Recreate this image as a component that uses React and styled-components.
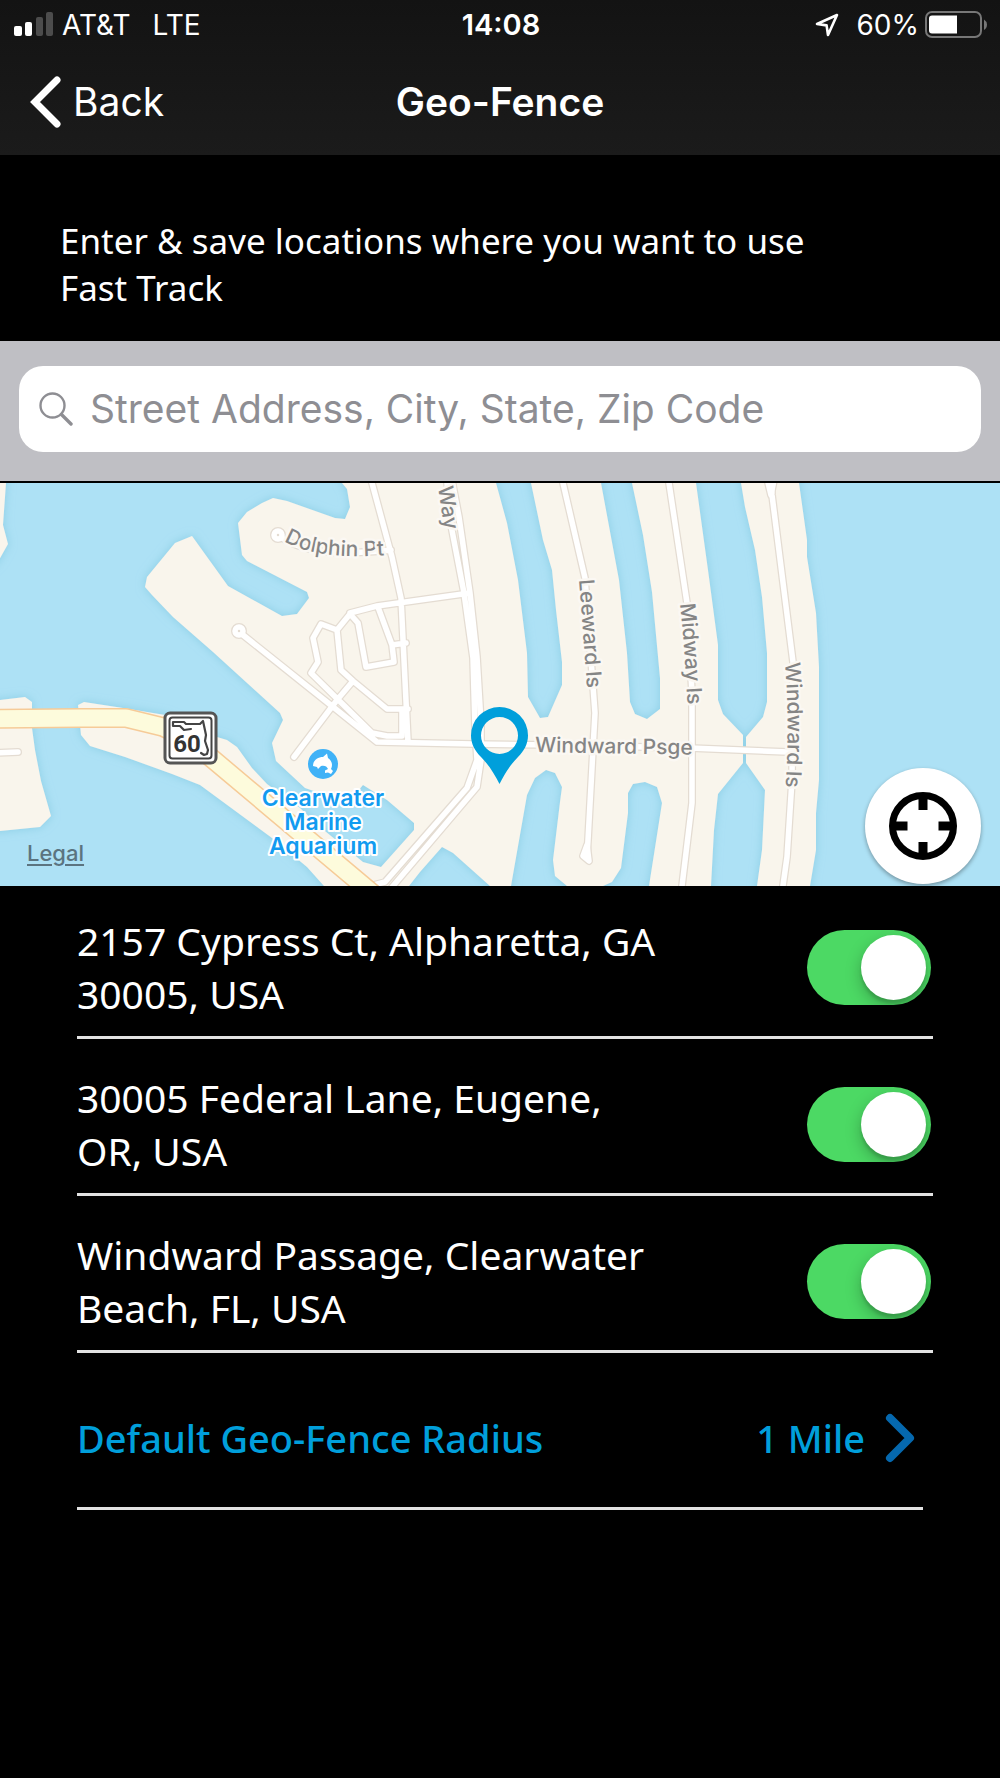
import React, { useState } from "react";
import styled, { createGlobalStyle } from "styled-components";

const uiFont = `Inter, "Liberation Sans", sans-serif`;
const brandFont = `"Noto Sans", "Open Sans", sans-serif`;

const GlobalStyle = createGlobalStyle`
  *, *::before, *::after { box-sizing: border-box; }
  body { margin: 0; background: #000; }
`;

const Screen = styled.div`
  min-height: 100vh;
  background: #000;
  color: #fff;
  font-family: ${uiFont};
`;

const Header = styled.header`
  background: linear-gradient(#131313, #1b1b1b);
`;

const StatusBar = styled.div`
  display: grid;
  grid-template-columns: 1fr auto 1fr;
  align-items: center;
  height: 50px;
  padding: 0 12px 0 14px;
  font-size: 28px;
  line-height: 36px;
`;

const StatusGroup = styled.div`
  display: flex;
  align-items: center;
  justify-content: ${(p) => (p.$end ? "flex-end" : "flex-start")};
  gap: ${(p) => (p.$end ? "5px" : "8px")};
`;

const Network = styled.span`
  margin-left: 14px;
`;

const Clock = styled.time`
  font-size: 29px;
  font-weight: 600;
`;

const Percent = styled.span`
  margin-left: 12px;
`;

const NavBar = styled.nav`
  display: grid;
  grid-template-columns: 1fr auto 1fr;
  align-items: center;
  height: 105px;
  padding: 0 30px 2px;
`;

const BackButton = styled.button`
  display: flex;
  align-items: center;
  justify-self: start;
  gap: 12px;
  padding: 0;
  border: 0;
  background: none;
  color: #fff;
  font: 400 39px/48px ${uiFont};
`;

const Title = styled.h1`
  margin: 0;
  font-size: 39px;
  line-height: 48px;
  font-weight: 600;
`;

const Intro = styled.p`
  max-width: 860px;
  margin: 0;
  padding: 62px 0 30px 60px;
  font: 400 35px/47px ${brandFont};
`;

const SearchBar = styled.form`
  padding: 25px 19px 29px;
  background: #bfbfc4;
  border-bottom: 2px solid #000;
`;

const SearchField = styled.label`
  display: flex;
  align-items: center;
  gap: 17px;
  height: 86px;
  padding: 0 20px;
  border-radius: 24px;
  background: #fff;
`;

const SearchInput = styled.input`
  flex: 1;
  min-width: 0;
  padding: 0;
  border: 0;
  outline: 0;
  background: none;
  color: #000;
  font: 400 39px/48px ${uiFont};
  &::placeholder { color: #8e8e93; opacity: 1; }
`;

const MapPanel = styled.section`
  position: relative;
  height: 403px;
  background: #ade1f5;
  overflow: hidden;
`;

const MapCanvas = styled.svg`
  display: block;
  width: 100%;
  height: 100%;
`;

const RoadLabel = styled.text`
  fill: #858585;
  stroke: #fbf8f3;
  stroke-width: 5px;
  stroke-linejoin: round;
  paint-order: stroke;
  font: 500 21px ${uiFont};
`;

const PlaceLabel = styled.text`
  fill: #129bf0;
  stroke: #fff;
  stroke-width: 4px;
  stroke-linejoin: round;
  paint-order: stroke;
  text-anchor: middle;
  font: 600 23px ${uiFont};
`;

const ShieldNumber = styled.text`
  fill: #333;
  text-anchor: middle;
  font: 700 24px Roboto, sans-serif;
`;

const LegalLink = styled.a`
  position: absolute;
  left: 27px;
  bottom: 18px;
  color: #5b7480;
  font-size: 22px;
  font-weight: 500;
  line-height: 30px;
  text-underline-offset: 3px;
`;

const LocateButton = styled.button`
  position: absolute;
  right: 19px;
  bottom: 2px;
  display: grid;
  place-items: center;
  width: 116px;
  height: 116px;
  padding: 0;
  border: 0;
  border-radius: 50%;
  background: #fff;
  box-shadow: 0 2px 4px rgba(0, 0, 0, 0.35);
`;

const Locations = styled.ul`
  display: flex;
  flex-direction: column;
  gap: 4px;
  margin: 0;
  padding: 28px 67px 0 77px;
  list-style: none;
`;

const LocationRow = styled.li`
  display: flex;
  align-items: center;
  justify-content: space-between;
  padding: ${(p) => (p.$first ? "0" : "28px")} 2px 16px 0;
  border-bottom: 3px solid #e2e2e2;
`;

const Address = styled.label`
  max-width: 590px;
  font: 400 39px/53px ${brandFont};
`;

const Switch = styled.input`
  appearance: none;
  flex: none;
  width: 124px;
  height: 75px;
  margin: 0;
  padding: 5px;
  overflow: hidden;
  border-radius: 38px;
  background: ${(p) => (p.checked ? "#4cd964" : "#39393d")};
  &::before {
    content: "";
    display: block;
    width: 65px;
    height: 65px;
    margin-left: ${(p) => (p.checked ? "49px" : "0")};
    border-radius: 50%;
    background: #fff;
    box-shadow: 0 6px 16px rgba(0, 0, 0, 0.25), 0 4px 3px rgba(0, 0, 0, 0.12);
  }
`;

const RadiusButton = styled.button`
  display: flex;
  align-items: center;
  justify-content: space-between;
  width: calc(100% - 154px);
  height: 157px;
  margin: 0 77px;
  padding: 16px 8px 0 0;
  border: 0;
  border-bottom: 3px solid #e2e2e2;
  background: none;
  color: #009fdb;
  font: 500 38px/53px ${brandFont};
`;

const RadiusValue = styled.span`
  display: flex;
  align-items: center;
  gap: 20px;
`;

const SignalIcon = () => (
  <svg width="40" height="26" viewBox="0 0 40 26" aria-hidden="true">
    <rect x="0" y="14" width="8" height="10" rx="2" fill="#fff" />
    <rect x="11" y="10" width="7" height="14" rx="2" fill="#fff" />
    <rect x="22" y="5" width="7" height="19" rx="2" fill="#4c4c4c" />
    <rect x="32" y="0" width="7" height="24" rx="2" fill="#4c4c4c" />
  </svg>
);

const LocationArrow = () => (
  <svg width="24" height="24" viewBox="0 0 24 24" aria-hidden="true">
    <path d="M2 11 22 2 13 22 11.6 12.4Z" fill="none" stroke="#fff" strokeWidth="2.6" strokeLinejoin="round" />
  </svg>
);

const BatteryIcon = () => (
  <svg width="64" height="28" viewBox="0 0 64 28" aria-hidden="true">
    <rect x="2" y="1" width="55" height="25" rx="6" fill="none" stroke="#777" strokeWidth="2" />
    <path d="M8 4.500H33V22.500H8Q5 22.500 5 19.500V7.500Q5 4.500 8 4.500Z" fill="#fff" />
    <path d="M60 8.500Q63 10.500 63 13.500Q63 17 60 19Z" fill="#777" />
  </svg>
);

const BackChevron = () => (
  <svg width="31" height="52" viewBox="0 0 31 52" aria-hidden="true">
    <path d="M27 4 5 26 27 48" fill="none" stroke="#fff" strokeWidth="7" strokeLinecap="round" strokeLinejoin="miter" />
  </svg>
);

const SearchIcon = () => (
  <svg width="34" height="34" viewBox="0 0 34 34" aria-hidden="true">
    <circle cx="13.500" cy="13.500" r="12" fill="none" stroke="#8e8e93" strokeWidth="2.400" />
    <path d="M22.500 22.500 32 32" stroke="#8e8e93" strokeWidth="3.400" strokeLinecap="round" />
  </svg>
);

const CrosshairIcon = () => (
  <svg width="70" height="70" viewBox="0 0 70 70" aria-hidden="true">
    <circle cx="35" cy="35" r="30.500" fill="none" stroke="#000" strokeWidth="7" />
    <path d="M35 3V19M35 51V67M3 35H19.500M50.500 35H67" stroke="#000" strokeWidth="9" />
  </svg>
);

const NextChevron = () => (
  <svg width="30" height="50" viewBox="0 0 30 50" aria-hidden="true">
    <path d="M5 5 25 25 5 45" fill="none" stroke="#0568ae" strokeWidth="8" strokeLinecap="round" strokeLinejoin="round" />
  </svg>
);

const land = [
  "M-20 470H7L6 483 3 525 8 544-1 560-20 580Z",
  "M-20 701 0 700 25 697 32 702V728L35 750 41 781 51 816 40 827 0 831H-20Z",
  // Mainland with its two basins, then the finger islands as one mass cut by canals
  "M342 470V483L347 489 350 507 345 519 335 518 287 501 273 498 262 503 247 512 238 523 242 555 247 561 307 592 309 598 297 614 282 616 228 586 192 536 175 543 147 577 145 587 152 595 173 617 213 652 280 713 283 720 272 743 276 761 305 788 340 800 352 798 363 785 387 800 414 823V830L381 867 363 862 320 827 300 808 267 784 252 768 237 747 227 740 217 737 165 715 123 708 84 702 78 705 81 735 90 746 125 757 172 774 200 785 272 838 307 867 324 886V900H809L810 886 816 850V813L819 780V667L816 613 807 557V540L799 483V470Z",
  "M400 900 409 886 420 872 442 847 453 853 490 886V900Z",
  "M492 470 496 483 507 523 518 580 527 653 528 697 540 718 548 717 562 685V662L556 610 552 570 543 540 531 483 528 470Z",
  "M509 900 511 886 527 795 535 778 546 770 555 773 562 787 560 802 553 860 555 876 567 886V900Z",
  "M599 470 601 483 619 580 627 653 630 702 635 714 647 719 660 709V678L652 592 643 535 632 483V470Z",
  "M603 900V886L612 882 621 868 628 813V793L633 784 645 782 657 787 662 803 649 886V900Z",
  "M695 470 696 483 708 570 718 645V700L723 714 743 735V763L718 794 714 830 711 886V900H756L757 886 762 850 765 790 746 763V737L763 717 767 702V653L762 597 755 550 745 507 741 483V470Z",
].join("");

const roads = [
  "M368 470 372 483 392 557 401 598 408 742",
  "M446 470 450 520 464 593 473 658 475 727 477 760 467 788 385 882 370 886",
  "M450 470 459 517 470 593 477 657 481 723 481 760 477 787 393 886 385 896",
  "M350 613 377 606 470 593",
  "M350 614 337 630 321 624 313 638 318 662 311 673 372 733 387 736H402V710",
  "M337 630 341 670 353 681 387 709H408",
  "M350 614 358 623 366 667 394 662 392 645 378 607M392 645 406 643",
  "M353 681 337 700 294 757",
  "M243 635 377 742 473 744 560 745 690 748 788 752",
  "M282 538C310 556 350 554 391 550",
  "M559 470 563 483 585 578 595 713 588 840 587 855",
  "M668 470 669 483 687 603 692 693V803L682 886 680 900",
  "M771 485 772 495 793 662 792 780 787 857 781 900",
  "M-10 753 18 752",
].join("");

const culDeSacs = "M587 845 583 856 589 861ZM765 470 771 495 776 470Z";
const causeway = "M-20 719 80 718H126L163 727Q190 739 209 756L372 893";

const AreaMap = () => (
  <MapCanvas viewBox="0 483 1000 403" preserveAspectRatio="xMidYMid slice" role="img" aria-label="Map of Clearwater Beach">
    <defs>
      <filter id="shore" x="-5%" y="-5%" width="110%" height="110%">
        <feDropShadow dx="0" dy="0" stdDeviation="5" floodColor="#83c9e0" floodOpacity="0.8" />
      </filter>
      <path id="dolphin-line" d="M284 541Q318 562 400 554" />
      <path id="way-line" d="M438 487 446 540" />
      <path id="leeward-line" d="M579 580Q583 630 588 700" />
      <path id="midway-line" d="M680 604Q685 650 688 715" />
      <path id="windward-line" d="M785 663Q790 725 785 800" />
    </defs>
    <path d={land} fill="#f9f5ec" fillRule="evenodd" filter="url(#shore)" />

    <g fill="none" strokeLinecap="round" strokeLinejoin="round">
      <g stroke="#e4dcd2" strokeWidth="8">
        <path d={roads} />
        <circle cx="239" cy="631" r="4" />
        <circle cx="278" cy="535" r="4" />
        <path d={culDeSacs} />
      </g>
      <g stroke="#fff" strokeWidth="5.500">
        <path d={roads} />
        <circle cx="239" cy="631" r="4" />
        <circle cx="278" cy="535" r="4" />
        <path d={culDeSacs} fill="#fff" />
      </g>
      <path d={causeway} stroke="#f6cb98" strokeWidth="20" />
      <path d={causeway} stroke="#fdfbdc" strokeWidth="17" />
    </g>

    <RoadLabel><textPath href="#dolphin-line">Dolphin Pt</textPath></RoadLabel>
    <RoadLabel><textPath href="#way-line">Way</textPath></RoadLabel>
    <RoadLabel><textPath href="#leeward-line">Leeward Is</textPath></RoadLabel>
    <RoadLabel><textPath href="#midway-line">Midway Is</textPath></RoadLabel>
    <RoadLabel><textPath href="#windward-line">Windward Is</textPath></RoadLabel>
    <RoadLabel x="535" y="752" transform="rotate(1 535 752)">Windward Psge</RoadLabel>

    <g>
      <rect x="165" y="713" width="51" height="50" rx="5" fill="#fff" stroke="#555" strokeWidth="3" />
      <rect x="169.500" y="717.500" width="42" height="41" rx="3" fill="#fff" stroke="#444" strokeWidth="2" />
      <path d="M173 722 184 722 186 724 200 724 203 721 206 735 205 741 208 750 207 754 204 755 201 753M173 722V726L180 726 184 730 191 729" fill="none" stroke="#444" strokeWidth="2.200" strokeLinejoin="round" strokeLinecap="round" />
      <ShieldNumber x="187" y="752">60</ShieldNumber>
    </g>

    <circle cx="323" cy="764" r="15" fill="#40b2f7" />
    <path d="M313 766C313 760 318 757 323 757L327 753.500 328 758C332 761 333 765 331 769L333 771 331 774 328 772.500 325 773 325 770.500 328 769C327 766 324 765 321 766L318 769 317 767Z" fill="#fff" />
    <PlaceLabel x="323" y="806">Clearwater</PlaceLabel>
    <PlaceLabel x="323" y="830">Marine</PlaceLabel>
    <PlaceLabel x="323" y="854">Aquarium</PlaceLabel>

    <path d="M499.500 707A28.500 28.500 0 0 0 471 735.500C471 744 475 751 481 757C489 765 495 775 499.500 784C504 775 510 765 518 757C524 751 528 744 528 735.500A28.500 28.500 0 0 0 499.500 707ZM499.500 717A18.500 18.500 0 1 1 499.500 754A18.500 18.500 0 1 1 499.500 717Z" fill="#009fdb" fillRule="evenodd" />
  </MapCanvas>
);

const initialLocations = [
  { id: "cypress", address: "2157 Cypress Ct, Alpharetta, GA 30005, USA", on: true },
  { id: "federal", address: "30005 Federal Lane, Eugene, OR, USA", on: true },
  { id: "windward", address: "Windward Passage, Clearwater Beach, FL, USA", on: true },
];

export default function App() {
  const [locations, setLocations] = useState(initialLocations);
  const toggle = (id) =>
    setLocations((list) => list.map((l) => (l.id === id ? { ...l, on: !l.on } : l)));

  return (
    <Screen>
      <GlobalStyle />
      <Header>
        <StatusBar>
          <StatusGroup>
            <SignalIcon />
            <span>AT&amp;T</span>
            <Network>LTE</Network>
          </StatusGroup>
          <Clock>14:08</Clock>
          <StatusGroup $end>
            <LocationArrow />
            <Percent>60%</Percent>
            <BatteryIcon />
          </StatusGroup>
        </StatusBar>
        <NavBar>
          <BackButton type="button">
            <BackChevron />
            Back
          </BackButton>
          <Title>Geo-Fence</Title>
        </NavBar>
      </Header>
      <main>
        <Intro>Enter &amp; save locations where you want to use Fast Track</Intro>
        <SearchBar onSubmit={(e) => e.preventDefault()}>
          <SearchField>
            <SearchIcon />
            <SearchInput type="search" aria-label="Search address" placeholder="Street Address, City, State, Zip Code" />
          </SearchField>
        </SearchBar>
        <MapPanel>
          <AreaMap />
          <LegalLink href="#legal">Legal</LegalLink>
          <LocateButton type="button" aria-label="Use current location">
            <CrosshairIcon />
          </LocateButton>
        </MapPanel>
        <Locations>
          {locations.map((l, i) => (
            <LocationRow key={l.id} $first={i === 0}>
              <Address htmlFor={l.id}>{l.address}</Address>
              <Switch id={l.id} type="checkbox" role="switch" checked={l.on} onChange={() => toggle(l.id)} />
            </LocationRow>
          ))}
        </Locations>
        <RadiusButton type="button">
          <span>Default Geo-Fence Radius</span>
          <RadiusValue>
            1 Mile
            <NextChevron />
          </RadiusValue>
        </RadiusButton>
      </main>
    </Screen>
  );
}
